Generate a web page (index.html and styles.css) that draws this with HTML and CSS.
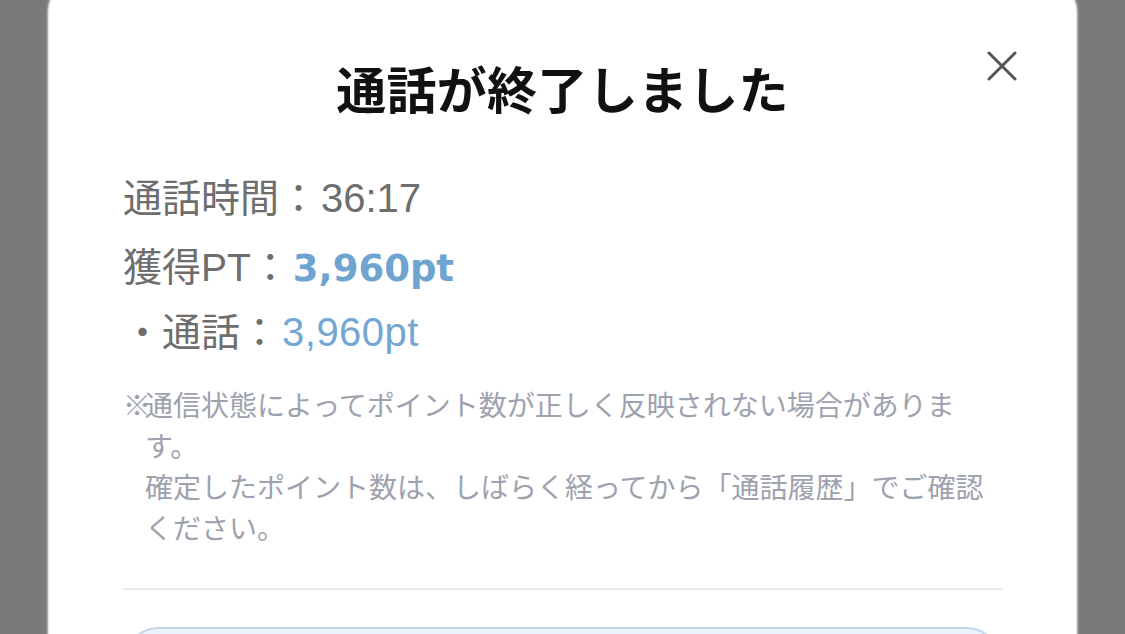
FILE: index.html
```html
<!DOCTYPE html>
<html lang="ja">
<head>
<meta charset="utf-8">
<title>通話終了</title>
<link rel="stylesheet" href="styles.css">
</head>
<body>
<div class="overlay">
  <div class="modal">
    <button class="close" aria-label="閉じる">
      <svg width="30" height="30" viewBox="0 0 30 30"><path d="M2 2 L28 28 M28 2 L2 28" stroke="#555" stroke-width="3" stroke-linecap="round" fill="none"/></svg>
    </button>
    <h1 class="title">通話が終了しました</h1>
    <p class="row row-time">通話時間：<span class="num">36:17</span></p>
    <p class="row row-pt">獲得PT：<span class="pt-total">3,960pt</span></p>
    <p class="row row-sub">・通話：<span class="num pt-sub">3,960pt</span></p>
    <p class="note"><span class="mark">※</span>通信状態によってポイント数が正しく反映されない場合がありま<br>す。<br>確定したポイント数は、しばらく経ってから「通話履歴」でご確認<br>ください。</p>
    <hr class="divider">
    <div class="btn"></div>
  </div>
</div>
</body>
</html>
```
FILE: styles.css
```css
html, body {
  margin: 0;
  padding: 0;
  height: 100%;
  overflow: hidden;
  background: #797979;
}
body {
  font-family: "Liberation Sans", "Noto Sans CJK JP", sans-serif;
}
.overlay {
  padding: 0 49px;
}
.modal {
  position: relative;
  margin-top: -20px;
  background: #fff;
  border-radius: 32px;
  box-shadow: 0 0 0 1px #e2e2e2, 0 0 2px 2px rgba(210, 210, 210, 0.8);
  padding: 62px 74px 40px;
  height: 700px;
  box-sizing: border-box;
}
.close {
  position: absolute;
  top: 71px;
  right: 59px;
  padding: 0;
  border: 0;
  background: none;
  width: 30px;
  height: 30px;
  line-height: 0;
}
.title {
  margin: 0;
  text-align: center;
  font-size: 50px;
  font-weight: bold;
  line-height: 100px;
  color: #111;
  letter-spacing: 0.3px;
}
.row {
  margin: 0;
  font-size: 39px;
  line-height: 50px;
  color: #6e6e6e;
  white-space: nowrap;
}
.num {
  font-size: 40px;
  margin-left: 3px;
}
.row-time {
  margin-top: 31px;
}
.row-pt {
  margin-top: 19px;
}
.row-sub {
  margin-top: 13px;
}
.pt-total {
  font-family: "DejaVu Sans", "Liberation Sans", sans-serif;
  font-weight: bold;
  font-size: 37px;
  color: #6fa4d0;
  margin-left: 3px;
}
.pt-sub {
  color: #73a7d2;
  letter-spacing: 0.5px;
}
.note {
  margin: 28px 0 0;
  font-size: 28px;
  line-height: 41px;
  color: #9da2ae;
  padding-left: 22px;
  text-indent: -22px;
  white-space: nowrap;
}
.mark {
  letter-spacing: -6px;
}
.divider {
  margin: 38px 0 0;
  border: 0;
  height: 2px;
  background: #e9e9e9;
}
.btn {
  margin-top: 37px;
  height: 80px;
  border: 2px solid #c3d5e7;
  background: #eaf3fd;
  border-radius: 36px;
}
```
